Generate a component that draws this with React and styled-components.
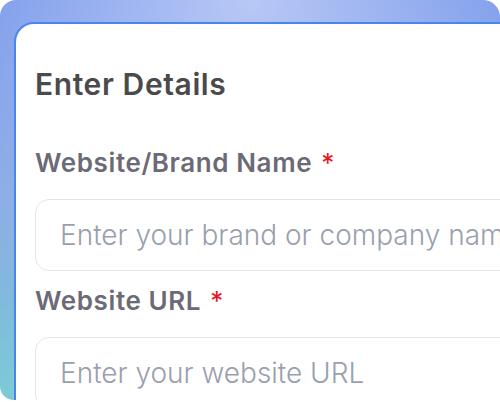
import React from "react";
import styled, { createGlobalStyle } from "styled-components";

const Global = createGlobalStyle`
  html, body { margin: 0; padding: 0; overflow: hidden; background: #ffffff; }
  body { font-family: "Inter", "Noto Sans", sans-serif; }
  * { box-sizing: border-box; }
`;

const Frame = styled.div`
  width: 500px;
  height: 400px;
  border-radius: 16px 17px 0 14px;
  padding: 22px 0 0 14px;
  background:
    radial-gradient(ellipse 75% 100% at 50% 0%, rgba(184, 200, 246, 1) 0%, rgba(184, 200, 246, 0) 100%),
    linear-gradient(180deg, #6a8ee8 0%, #84a9e2 50%, #7dcbd5 100%);
`;

const Card = styled.div`
  width: 540px;
  height: 440px;
  background: #ffffff;
  border: 2px solid #4a85ee;
  border-radius: 20px;
  padding: 43px 0 0 19px;
  display: flex;
  flex-direction: column;
`;

const Heading = styled.h1`
  margin: 0 0 47px;
  font-size: 30px;
  line-height: 34px;
  font-weight: 600;
  letter-spacing: 0.6px;
  color: #4a4a4c;
`;

const Field = styled.div`
  display: flex;
  flex-direction: column;
  gap: 21px;
  margin-bottom: 15px;
`;

const Label = styled.label`
  font-size: 26px;
  line-height: 30px;
  font-weight: 600;
  letter-spacing: 0.6px;
  color: #6b6a76;
`;

const Required = styled.span`
  color: #e8141b;
  margin-left: 9px;
  font-weight: 400;
`;

const Input = styled.input`
  width: 520px;
  height: 72px;
  border: 1.5px solid #e1e4e9;
  border-radius: 14px;
  padding: 0 0 0 24px;
  font-family: "Inter", "Noto Sans", sans-serif;
  font-size: 28px;
  font-weight: 300;
  color: #333;
  background: #fff;
  outline: none;
  &::placeholder { color: #9a9fae; }
`;

export default function App() {
  return (
    <>
      <Global />
      <Frame>
        <Card>
          <Heading>Enter Details</Heading>
          <Field>
            <Label>Website/Brand Name<Required>*</Required></Label>
            <Input placeholder="Enter your brand or company name" />
          </Field>
          <Field>
            <Label>Website URL<Required>*</Required></Label>
            <Input placeholder="Enter your website URL" />
          </Field>
        </Card>
      </Frame>
    </>
  );
}
